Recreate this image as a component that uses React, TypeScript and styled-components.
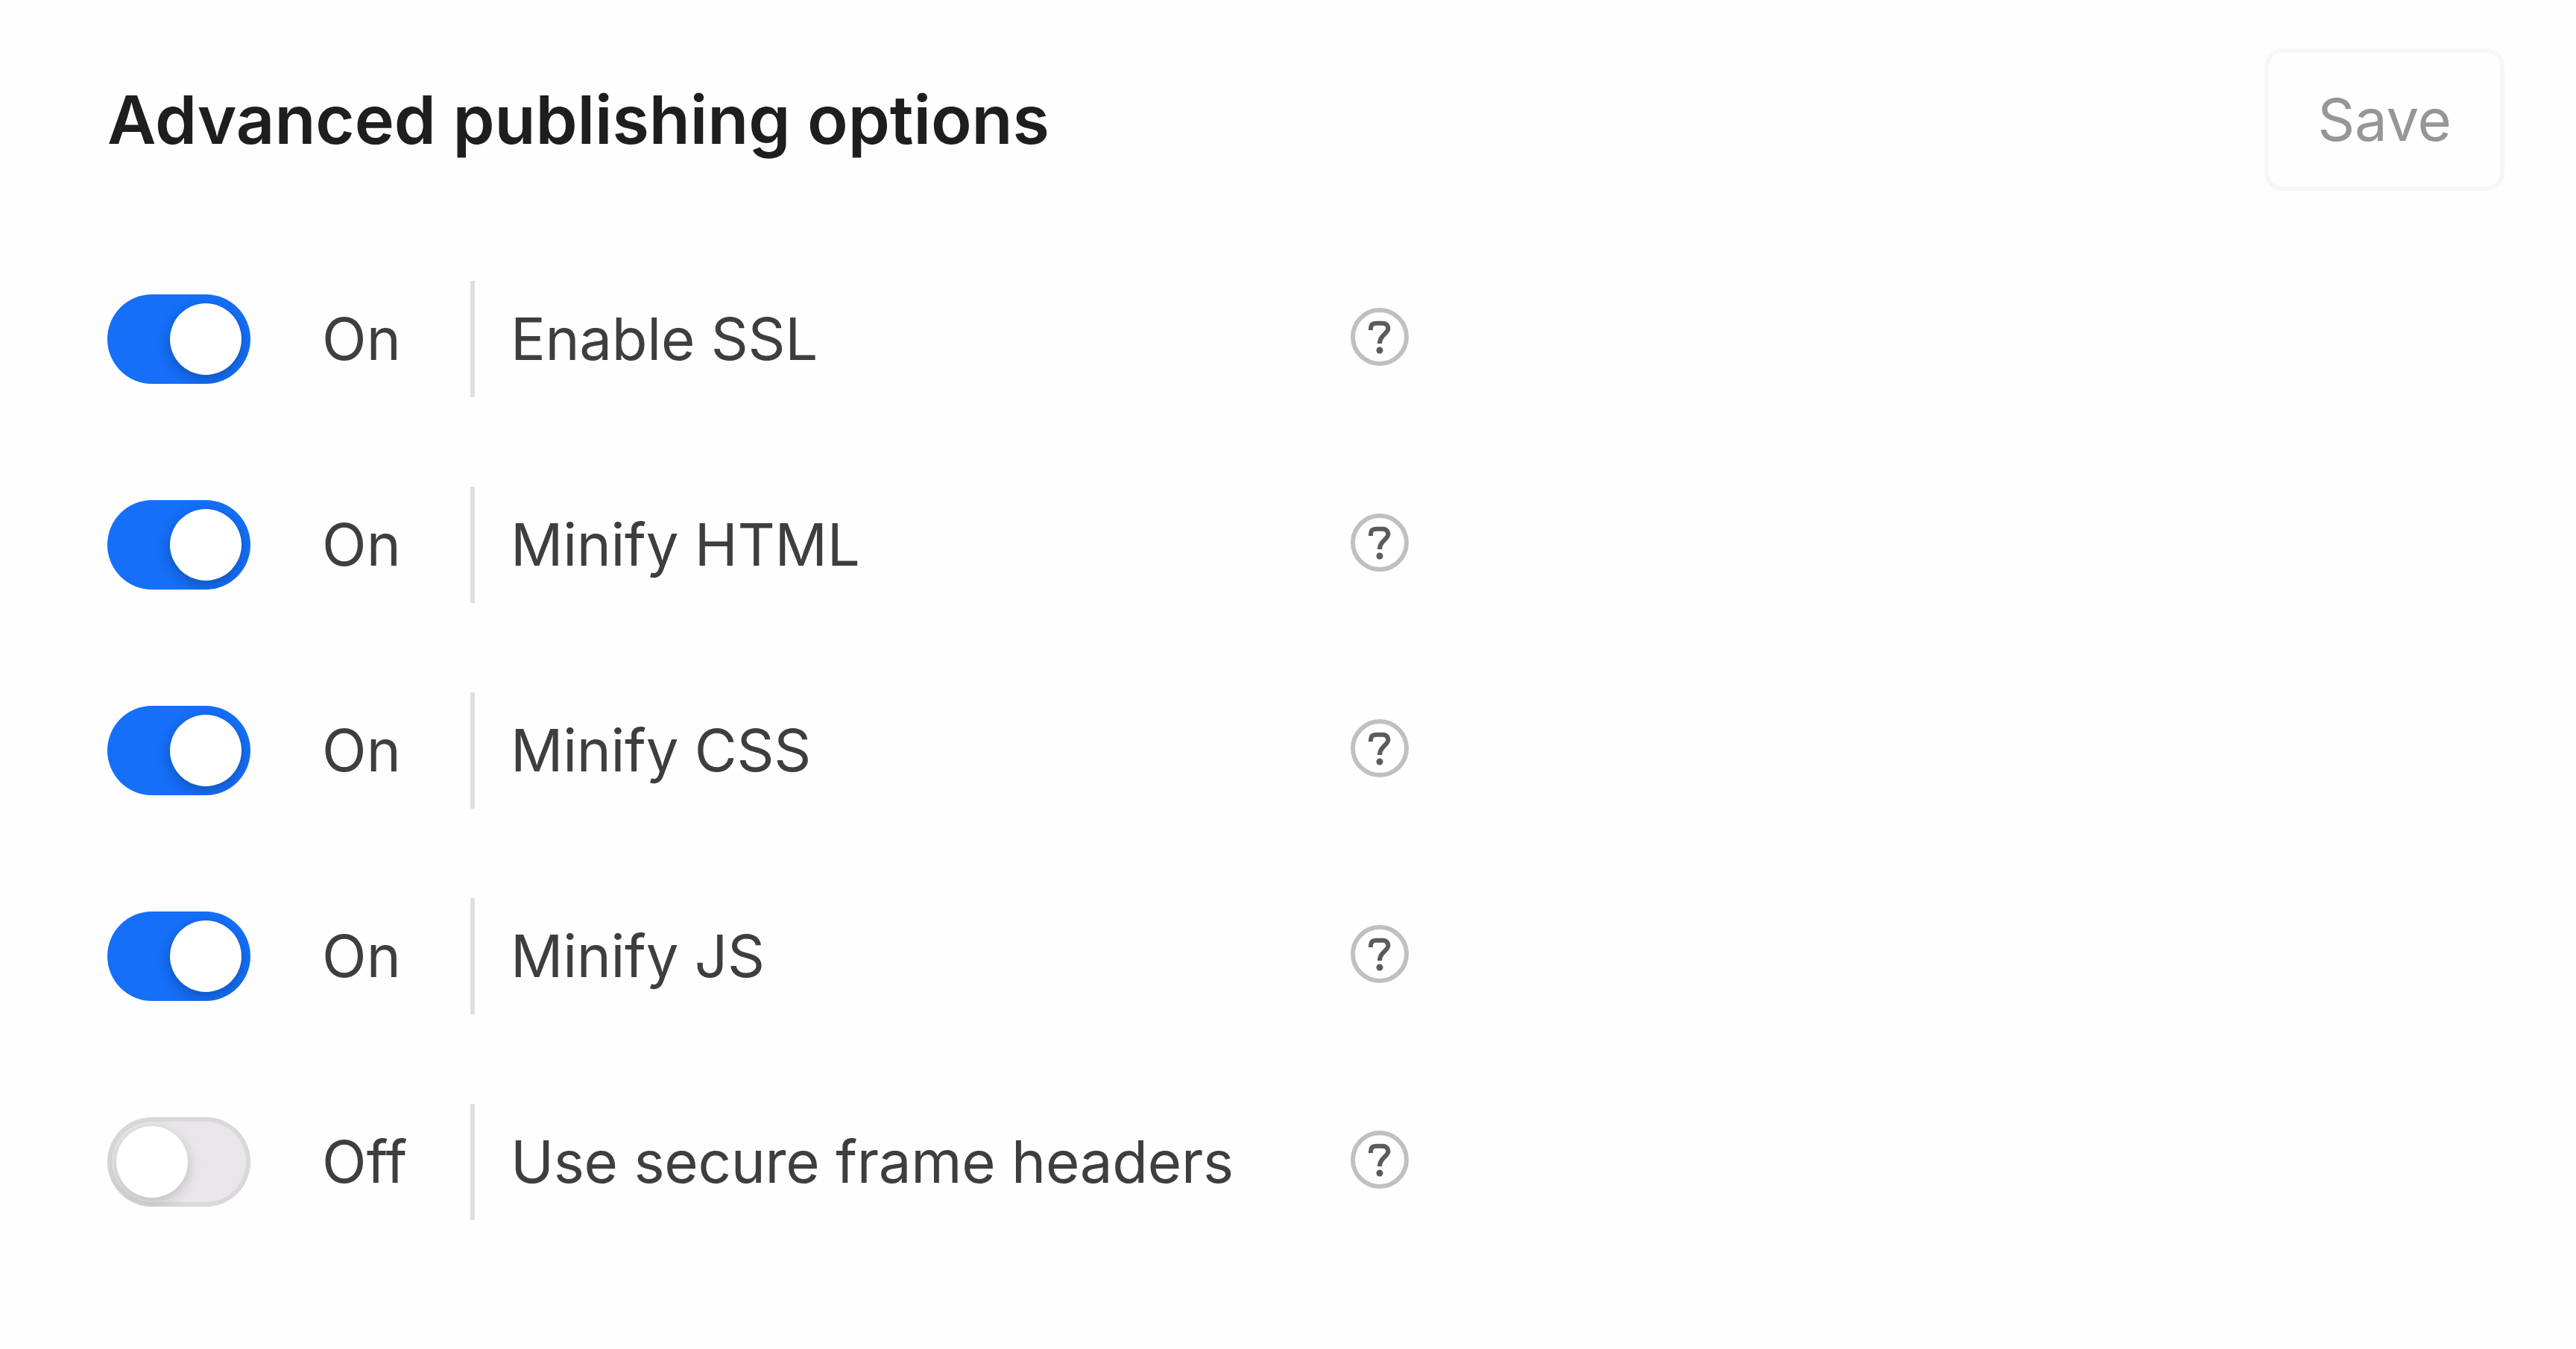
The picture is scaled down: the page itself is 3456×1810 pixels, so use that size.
import React, { useState } from "react";
import styled, { createGlobalStyle } from "styled-components";

interface PublishOption {
  id: string;
  label: string;
  enabled: boolean;
}

const initialOptions: PublishOption[] = [
  { id: "ssl", label: "Enable SSL", enabled: true },
  { id: "html", label: "Minify HTML", enabled: true },
  { id: "css", label: "Minify CSS", enabled: true },
  { id: "js", label: "Minify JS", enabled: true },
  { id: "frame", label: "Use secure frame headers", enabled: false },
];

const HelpIcon: React.FC = () => (
  <HelpSvg viewBox="0 0 78 78" fill="none">
    <circle cx="39" cy="39" r="36" stroke="#c1bfc2" strokeWidth="6" />
    <path
      d="M27 30V28C27 23.4 29.2 20.8 34 20.8H43C49.6 20.8 52.4 27.2 48.6 32L42.4 38.8C40.2 41.4 39 43.4 39 48"
      stroke="#5c5a5d"
      strokeWidth="6"
    />
    <circle cx="39" cy="57" r="4.5" fill="#5c5a5d" />
  </HelpSvg>
);

const App: React.FC = () => {
  const [options, setOptions] = useState<PublishOption[]>(initialOptions);

  const handleToggle = (id: string) => {
    setOptions((prev) =>
      prev.map((option) =>
        option.id === id ? { ...option, enabled: !option.enabled } : option
      )
    );
  };

  return (
    <>
      <GlobalStyle />
      <PublishingSection>
        <Header>
          <Title>Advanced publishing options</Title>
          <SaveButton disabled>Save</SaveButton>
        </Header>
        <OptionList>
          {options.map(({ id, label, enabled }) => (
            <OptionRow key={id}>
              <Switch
                role="switch"
                aria-checked={enabled}
                $on={enabled}
                onClick={() => handleToggle(id)}
              >
                <Knob $on={enabled} />
              </Switch>
              <Status>{enabled ? "On" : "Off"}</Status>
              <OptionLabel>{label}</OptionLabel>
              <HelpIcon />
            </OptionRow>
          ))}
        </OptionList>
      </PublishingSection>
    </>
  );
};

const GlobalStyle = createGlobalStyle`
  * {
    box-sizing: border-box;
  }

  body {
    margin: 0;
    background-color: #fefefe;
    font-family: Inter, "Liberation Sans", sans-serif;
    font-optical-sizing: none;
  }
`;

const PublishingSection = styled.section`
  min-height: 100vh;
  padding: 65px 96px 0 144px;
`;

const Header = styled.header`
  display: flex;
  align-items: center;
  justify-content: space-between;
  height: 191px;
`;

const Title = styled.h2`
  margin: 0;
  font-size: 90px;
  font-weight: 600;
  line-height: 120px;
  letter-spacing: -0.1px;
  color: #1f1d20;
`;

const SaveButton = styled.button`
  width: 322px;
  height: 191px;
  padding: 0;
  border: 6px solid #f7f5f8;
  border-radius: 24px;
  background-color: #fefefe;
  font-family: inherit;
  font-size: 78px;
  letter-spacing: -0.3px;
  color: #979598;
`;

const OptionList = styled.div`
  display: flex;
  flex-direction: column;
  gap: 120px;
  margin-top: 121px;
`;

const OptionRow = styled.div`
  display: flex;
  align-items: center;
  height: 156px;
  font-size: 78px;
  line-height: 156px;
  color: #3f3d40;
`;

const Switch = styled.button<{ $on: boolean }>`
  flex: none;
  display: flex;
  align-items: center;
  justify-content: ${({ $on }) => ($on ? "flex-end" : "flex-start")};
  width: 192px;
  height: 120px;
  padding: 0 12px;
  border: none;
  border-radius: 60px;
  overflow: hidden;
  background-color: ${({ $on }) => ($on ? "#156ff8" : "#e8e6e9")};
  box-shadow: ${({ $on }) => ($on ? "none" : "inset 0 0 0 6px #dad8da")};
`;

const Knob = styled.span<{ $on: boolean }>`
  width: 96px;
  height: 96px;
  border-radius: 50%;
  background-color: #fff;
  box-shadow: 0 6px 18px rgba(0, 0, 0, ${({ $on }) => ($on ? 0.25 : 0.18)});
`;

const Status = styled.span`
  width: 199px;
  margin-left: 96px;
`;

const OptionLabel = styled.span`
  width: 1181px;
  padding-left: 48px;
  border-left: 6px solid #e0dee0;
  letter-spacing: -0.3px;
  white-space: nowrap;
`;

const HelpSvg = styled.svg`
  flex: none;
  width: 78px;
  height: 78px;
  margin-bottom: 6px;
`;

export default App;
